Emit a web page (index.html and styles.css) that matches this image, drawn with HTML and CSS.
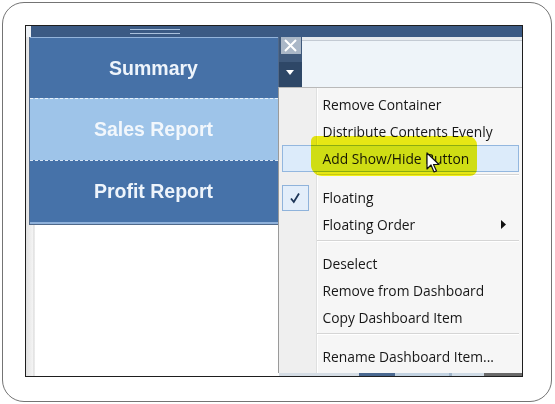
FILE: index.html
```html
<!DOCTYPE html>
<html lang="en">
<head>
    <meta charset="UTF-8">
    <title>Dashboard container menu</title>
    <link rel="stylesheet" href="styles.css">
</head>
<body>
    <div class="frame">
        <div class="shot">
            <div class="topbar">
                <span class="grip"></span>
            </div>
            <div class="main">
                <div class="canvas">
                    <div class="panel">
                        <div class="tile summary">Summary</div>
                        <div class="tile sales">Sales Report</div>
                        <div class="tile profit">Profit Report</div>
                    </div>
                </div>
                <div class="side">
                    <div class="ctrl">
                        <span class="close-btn">
                            <svg width="13" height="13" viewBox="0 0 13 13"><path d="M1 1L12 12M12 1L1 12" stroke="#fff" stroke-width="2"/></svg>
                        </span>
                        <span class="drop-btn">
                            <svg width="8" height="5" viewBox="0 0 8 5"><path d="M0 0H8L4 5Z" fill="#fff"/></svg>
                        </span>
                    </div>
                    <div class="pane"></div>
                    <div class="strip"></div>
                </div>
            </div>

            <div class="menu">
                <div class="item">Remove Container</div>
                <div class="item">Distribute Contents Evenly</div>
                <div class="item hover">Add Show/Hide Button</div>
                <div class="sep"></div>
                <div class="item checked">
                    <span class="checkbox">
                        <svg width="12" height="12" viewBox="0 0 12 12"><path d="M2 6.5L4.8 10L10 1.5" fill="none" stroke="#1d3557" stroke-width="1.8"/></svg>
                    </span>
                    Floating
                </div>
                <div class="item">
                    Floating Order
                    <svg class="sub" width="5" height="9" viewBox="0 0 5 9"><path d="M0 0L5 4.5L0 9Z" fill="#111"/></svg>
                </div>
                <div class="sep"></div>
                <div class="item">Deselect</div>
                <div class="item">Remove from Dashboard</div>
                <div class="item">Copy Dashboard Item</div>
                <div class="sep"></div>
                <div class="item">Rename Dashboard Item...</div>

                <span class="marker"></span>
                <svg class="cursor" width="14" height="22" viewBox="0 0 14 22">
                    <path d="M1 1V17L5 13L8 20L10.5 19L7.5 12.5H13Z" fill="#fff" stroke="#111" stroke-width="1.2" stroke-linejoin="round"/>
                </svg>
            </div>
        </div>
    </div>
</body>
</html>
```

FILE: styles.css
```css
body {
    margin: 0;
    background-color: #fff;
}

.frame {
    margin: 2px;
    width: 550px;
    height: 400px;
    box-sizing: border-box;
    border: 1.5px solid #747474;
    border-radius: 22px;
    padding: 21.5px;
}

.shot {
    position: relative;
    width: 498px;
    height: 352px;
    box-sizing: border-box;
    border: 1px solid #1e1e1e;
    background-color: #fff;
    display: flex;
    flex-direction: column;
    overflow: hidden;
}

.topbar {
    height: 11px;
    background-color: #3b5a84;
    border-left: 5px solid #eef2f6;
    display: flex;
    align-items: center;
}

.grip {
    margin-left: 99px;
    width: 50px;
    height: 3px;
    border-top: 1px solid #a9c0dc;
    border-bottom: 1px solid #a9c0dc;
}

.main {
    flex: 1;
    display: flex;
}

.canvas {
    width: 253px;
    background: linear-gradient(to right, #e2e2e2 0, #f4f4f4 7px, #d4d4d4 8px, #fff 9px);
}

.panel {
    margin-left: 3px;
    width: 250px;
    box-sizing: border-box;
    border: 1px solid #50698a;
    border-top: none;
    display: flex;
    flex-direction: column;
}

.tile {
    display: flex;
    align-items: center;
    justify-content: center;
    height: 62px;
    box-sizing: border-box;
    font-family: "Liberation Sans", Arial, sans-serif;
    font-weight: bold;
    font-size: 19.5px;
    color: #eef4fb;
}

.summary {
    height: 61px;
    padding-top: 2px;
    background-color: #4671a7;
    border-top: 1px solid #94b4db;
}

.sales {
    background-color: #9ec4e9;
    border-top: 1px dashed #e8f1fb;
    color: #f2f7fc;
}

.profit {
    height: 64px;
    background-color: #4672a9;
    border-top: 1px dashed #d9e6f5;
    border-bottom: 2px solid #8fb1da;
}

.side {
    flex: 1;
    display: grid;
    grid-template-columns: 23px 1fr;
    grid-template-rows: 51px 1fr;
}

.ctrl {
    background-color: #3f597b;
    display: flex;
    flex-direction: column;
    justify-content: space-between;
}

.close-btn {
    margin-left: 2px;
    width: 20px;
    height: 17px;
    background-color: #aab7c7;
    display: flex;
    align-items: center;
    justify-content: center;
}

.drop-btn {
    height: 26px;
    background-color: #2e4767;
    display: flex;
    justify-content: center;
    padding-top: 8px;
    box-sizing: border-box;
}

.pane {
    background-color: #eef4f9;
    border-top: 3px solid #e6eaee;
    box-shadow: inset 0 1px 0 #c3cad3;
}

.strip {
    grid-column: 1 / 3;
    background: linear-gradient(to right, #d5dde5 0 80px, #4a6890 80px 116px, #c2d2e1 116px 170px, #9fb4c9 170px 173px, #cfdbe6 173px 205px, #6a6a6a 205px);
}

/* context menu over the dashboard */
.menu {
    position: absolute;
    left: 252px;
    top: 61px;
    width: 244px;
    height: 286px;
    box-sizing: border-box;
    border-left: 1px solid #9a9a9a;
    border-top: 1px solid #b9b9b9;
    padding: 3px 3px 0 3px;
    background: linear-gradient(to right, #efefef 0 37px, #dfe0e0 37px 38px, #fff 38px 39px, #f6f6f6 39px);
    font-family: "Open Sans", "Noto Sans", sans-serif;
    font-size: 13.8px;
    font-weight: 500;
    color: #181818;
}

.item {
    position: relative;
    height: 27px;
    box-sizing: border-box;
    padding-left: 41px;
    display: flex;
    align-items: center;
}

.hover {
    background-color: #dcebfa;
    border: 1px solid #93b7df;
    padding-left: 40px;
}

.sep {
    margin: 2px 0 8px 35px;
    height: 1px;
    background-color: #d5d5d5;
    border-bottom: 1px solid #fff;
}

.checkbox {
    position: absolute;
    left: 0;
    top: 1px;
    width: 27px;
    height: 26px;
    box-sizing: border-box;
    border: 1px solid #8fb3db;
    background-color: #e3eefa;
    display: flex;
    align-items: center;
    justify-content: center;
}

.sub {
    position: absolute;
    right: 13px;
    top: 9px;
}

.marker {
    position: absolute;
    left: 32px;
    top: 48px;
    width: 166px;
    height: 40px;
    background-color: #f0f014;
    border-radius: 5px 9px 7px 11px;
    mix-blend-mode: multiply;
}

.cursor {
    position: absolute;
    left: 147px;
    top: 64px;
}
```
